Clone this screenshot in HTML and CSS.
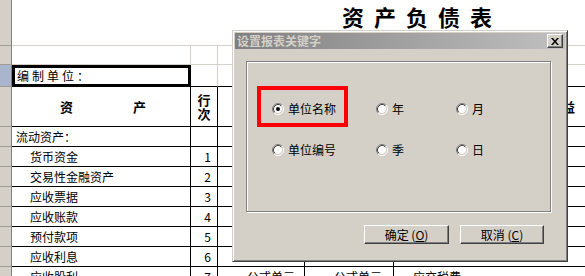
FILE: index.html
```html
<!DOCTYPE html>
<html lang="zh-CN">
<head>
    <meta charset="UTF-8">
    <title>资产负债表 - 设置报表关键字</title>
    <link rel="stylesheet" href="styles.css">
</head>
<body>

<div class="sheet">
    <div class="row r-title">
        <div class="hd"></div>
        <div class="cell title">资产负债表</div>
    </div>
    <div class="row r-blank">
        <div class="hd"></div>
        <div class="cell g"></div>
        <div class="cell g"></div>
        <div class="cell g"></div>
        <div class="cell g"></div>
        <div class="cell g last"></div>
    </div>
    <div class="row r-unit">
        <div class="hd sel"></div>
        <div class="cell unit">编制单位：</div>
        <div class="cell g bb"></div>
        <div class="cell g bb"></div>
        <div class="cell g bb"></div>
        <div class="cell g bb last"></div>
    </div>
    <div class="row r-head">
        <div class="hd"></div>
        <div class="cell b head"><span>资</span><span>产</span></div>
        <div class="cell b head-no">行<br>次</div>
        <div class="cell b"></div>
        <div class="cell b"></div>
        <div class="cell b last head-right">负债和所有者权益</div>
    </div>
    <div class="row r-item">
        <div class="hd"></div>
        <div class="cell b">流动资产：</div>
        <div class="cell b num"></div>
        <div class="cell b"></div>
        <div class="cell b"></div>
        <div class="cell b last"></div>
    </div>
    <div class="row r-item">
        <div class="hd"></div>
        <div class="cell b sub">货币资金</div>
        <div class="cell b num">1</div>
        <div class="cell b"></div>
        <div class="cell b"></div>
        <div class="cell b last"></div>
    </div>
    <div class="row r-item">
        <div class="hd"></div>
        <div class="cell b sub">交易性金融资产</div>
        <div class="cell b num">2</div>
        <div class="cell b"></div>
        <div class="cell b"></div>
        <div class="cell b last"></div>
    </div>
    <div class="row r-item">
        <div class="hd"></div>
        <div class="cell b sub">应收票据</div>
        <div class="cell b num">3</div>
        <div class="cell b"></div>
        <div class="cell b"></div>
        <div class="cell b last"></div>
    </div>
    <div class="row r-item">
        <div class="hd"></div>
        <div class="cell b sub">应收账款</div>
        <div class="cell b num">4</div>
        <div class="cell b"></div>
        <div class="cell b"></div>
        <div class="cell b last"></div>
    </div>
    <div class="row r-item">
        <div class="hd"></div>
        <div class="cell b sub">预付款项</div>
        <div class="cell b num">5</div>
        <div class="cell b"></div>
        <div class="cell b"></div>
        <div class="cell b last"></div>
    </div>
    <div class="row r-item">
        <div class="hd"></div>
        <div class="cell b sub">应收利息</div>
        <div class="cell b num">6</div>
        <div class="cell b"></div>
        <div class="cell b"></div>
        <div class="cell b last"></div>
    </div>
    <div class="row r-item">
        <div class="hd"></div>
        <div class="cell b sub">应收股利</div>
        <div class="cell b num">7</div>
        <div class="cell b formula">公式单元</div>
        <div class="cell b formula">公式单元</div>
        <div class="cell b last tax">应交税费</div>
    </div>
</div>

<div class="dialog">
    <div class="titlebar">
        <span class="caption">设置报表关键字</span>
        <button class="close">
            <svg width="8" height="7" viewBox="0 0 8 7"><path d="M0 0h2l2 2.5L6 0h2L5 3.5 8 7H6L4 4.5 2 7H0l3-3.5z" fill="#000"/></svg>
        </button>
    </div>

    <div class="group">
        <div class="options">
            <label class="opt">
                <svg class="radio" width="12" height="12" viewBox="0 0 12 12">
                    <circle cx="6" cy="6" r="4.2" fill="#fff"/>
                    <path d="M2.11 9.89A5.5 5.5 0 0 1 9.89 2.11" stroke="#808080" fill="none"/>
                    <path d="M9.89 2.11A5.5 5.5 0 0 1 2.11 9.89" stroke="#fff" fill="none"/>
                    <path d="M2.82 9.18A4.5 4.5 0 0 1 9.18 2.82" stroke="#404040" fill="none"/>
                    <path d="M9.18 2.82A4.5 4.5 0 0 1 2.82 9.18" stroke="#d4d0c8" fill="none"/>
                    <circle cx="6" cy="6" r="2" fill="#000"/>
                </svg>
                <span>单位名称</span>
            </label>
            <label class="opt">
                <svg class="radio" width="12" height="12" viewBox="0 0 12 12">
                    <circle cx="6" cy="6" r="4.2" fill="#fff"/>
                    <path d="M2.11 9.89A5.5 5.5 0 0 1 9.89 2.11" stroke="#808080" fill="none"/>
                    <path d="M9.89 2.11A5.5 5.5 0 0 1 2.11 9.89" stroke="#fff" fill="none"/>
                    <path d="M2.82 9.18A4.5 4.5 0 0 1 9.18 2.82" stroke="#404040" fill="none"/>
                    <path d="M9.18 2.82A4.5 4.5 0 0 1 2.82 9.18" stroke="#d4d0c8" fill="none"/>
                </svg>
                <span>年</span>
            </label>
            <label class="opt">
                <svg class="radio" width="12" height="12" viewBox="0 0 12 12">
                    <circle cx="6" cy="6" r="4.2" fill="#fff"/>
                    <path d="M2.11 9.89A5.5 5.5 0 0 1 9.89 2.11" stroke="#808080" fill="none"/>
                    <path d="M9.89 2.11A5.5 5.5 0 0 1 2.11 9.89" stroke="#fff" fill="none"/>
                    <path d="M2.82 9.18A4.5 4.5 0 0 1 9.18 2.82" stroke="#404040" fill="none"/>
                    <path d="M9.18 2.82A4.5 4.5 0 0 1 2.82 9.18" stroke="#d4d0c8" fill="none"/>
                </svg>
                <span>月</span>
            </label>
            <label class="opt">
                <svg class="radio" width="12" height="12" viewBox="0 0 12 12">
                    <circle cx="6" cy="6" r="4.2" fill="#fff"/>
                    <path d="M2.11 9.89A5.5 5.5 0 0 1 9.89 2.11" stroke="#808080" fill="none"/>
                    <path d="M9.89 2.11A5.5 5.5 0 0 1 2.11 9.89" stroke="#fff" fill="none"/>
                    <path d="M2.82 9.18A4.5 4.5 0 0 1 9.18 2.82" stroke="#404040" fill="none"/>
                    <path d="M9.18 2.82A4.5 4.5 0 0 1 2.82 9.18" stroke="#d4d0c8" fill="none"/>
                </svg>
                <span>单位编号</span>
            </label>
            <label class="opt">
                <svg class="radio" width="12" height="12" viewBox="0 0 12 12">
                    <circle cx="6" cy="6" r="4.2" fill="#fff"/>
                    <path d="M2.11 9.89A5.5 5.5 0 0 1 9.89 2.11" stroke="#808080" fill="none"/>
                    <path d="M9.89 2.11A5.5 5.5 0 0 1 2.11 9.89" stroke="#fff" fill="none"/>
                    <path d="M2.82 9.18A4.5 4.5 0 0 1 9.18 2.82" stroke="#404040" fill="none"/>
                    <path d="M9.18 2.82A4.5 4.5 0 0 1 2.82 9.18" stroke="#d4d0c8" fill="none"/>
                </svg>
                <span>季</span>
            </label>
            <label class="opt">
                <svg class="radio" width="12" height="12" viewBox="0 0 12 12">
                    <circle cx="6" cy="6" r="4.2" fill="#fff"/>
                    <path d="M2.11 9.89A5.5 5.5 0 0 1 9.89 2.11" stroke="#808080" fill="none"/>
                    <path d="M9.89 2.11A5.5 5.5 0 0 1 2.11 9.89" stroke="#fff" fill="none"/>
                    <path d="M2.82 9.18A4.5 4.5 0 0 1 9.18 2.82" stroke="#404040" fill="none"/>
                    <path d="M9.18 2.82A4.5 4.5 0 0 1 2.82 9.18" stroke="#d4d0c8" fill="none"/>
                </svg>
                <span>日</span>
            </label>
        </div>
        <div class="mark"></div>
    </div>

    <div class="actions">
        <button class="btn ok">确定 (<u>O</u>)</button>
        <button class="btn">取消 (<u>C</u>)</button>
    </div>
</div>

</body>
</html>
```

FILE: styles.css
```css
* {
    box-sizing: border-box;
}
body {
    margin: 0;
    width: 585px;
    height: 276px;
    overflow: hidden;
    position: relative;
    background-color: #fff;
    font-family: "Noto Sans CJK SC", "Liberation Sans", sans-serif;
    font-size: 12px;
    color: #000;
}

/* spreadsheet behind the dialog */
.row {
    display: grid;
    grid-template-columns: 12px 179px 27px 87px 89px 1fr;
}
.r-title { height: 46px; }
.r-blank { height: 19px; }
.r-unit { height: 22px; }
.r-head { height: 40px; }
.r-item { height: 20px; }
.hd {
    background-color: #d4d0c8;
    border-right: 1px solid #808080;
    border-bottom: 1px solid #a09c94;
}
.hd.sel {
    background-color: #a9b5cd;
}
.cell {
    display: flex;
    align-items: center;
    padding-left: 4px;
    line-height: 14px;
    white-space: nowrap;
    overflow: hidden;
}
.title {
    grid-column: 2 / -1;
    align-items: flex-start;
    padding: 4px 0 0 330px;
    font-size: 22px;
    font-weight: bold;
    line-height: 24px;
    letter-spacing: 10px;
    border-bottom: 1px solid #d4d0c8;
}
.g {
    border-right: 1px solid #d4d0c8;
    border-bottom: 1px solid #d4d0c8;
}
.g.bb {
    border-bottom-color: #000;
}
.b {
    border-right: 1px solid #000;
    border-bottom: 1px solid #000;
}
.last {
    border-right: none;
}
.unit {
    border: 3px solid #000;
    padding-left: 2px;
    letter-spacing: 3px;
}
.head {
    justify-content: center;
    gap: 60px;
    font-size: 13px;
    font-weight: bold;
}
.head-no {
    justify-content: center;
    padding: 0;
    font-size: 13px;
    font-weight: bold;
    text-align: center;
}
.head-right {
    justify-content: flex-end;
    padding-right: 10px;
    font-size: 13px;
    font-weight: bold;
}
.sub {
    padding-left: 18px;
}
.num {
    justify-content: flex-end;
    padding-right: 6px;
}
.formula {
    align-items: flex-start;
    padding: 3px 0 0 29px;
}
.tax {
    align-items: flex-start;
    padding: 3px 0 0 19px;
}

/* dialog window */
.dialog {
    position: absolute;
    left: 232px;
    top: 30px;
    width: 336px;
    height: 232px;
    padding: 2px;
    background-color: #d4d0c8;
    border: 1px solid;
    border-color: #d4d0c8 #404040 #404040 #d4d0c8;
    box-shadow: inset 1px 1px 0 #fff, inset -1px -1px 0 #808080;
}
.titlebar {
    display: flex;
    align-items: center;
    justify-content: space-between;
    height: 16px;
    padding: 0 2px;
    background: linear-gradient(to right, #808080, #c0c0c0);
}
.caption {
    color: #d4d0c8;
    font-weight: bold;
    line-height: 14px;
}
.close {
    display: flex;
    align-items: center;
    justify-content: center;
    width: 16px;
    height: 14px;
    padding: 0;
    background-color: #d4d0c8;
    border: 1px solid;
    border-color: #fff #404040 #404040 #fff;
    box-shadow: inset -1px -1px 0 #808080;
}
.group {
    position: relative;
    width: 305px;
    height: 151px;
    margin: 12px 0 0 11px;
    padding: 40px 0 0 25px;
    border: 1px solid #808080;
    box-shadow: inset 1px 1px 0 #fff, 1px 1px 0 #fff;
}
.options {
    display: grid;
    grid-template-columns: 104px 80px 1fr;
    row-gap: 27px;
}
.opt {
    display: flex;
    align-items: center;
    gap: 4px;
    height: 14px;
    line-height: 14px;
}
.radio {
    flex: none;
}
.mark {
    position: absolute;
    left: 10px;
    top: 24px;
    width: 91px;
    height: 41px;
    border: 4px solid #ff0000;
}
.actions {
    display: flex;
    justify-content: flex-end;
    gap: 11px;
    margin-top: 13px;
    padding-right: 21px;
}
.btn {
    width: 84px;
    height: 19px;
    padding: 0;
    font-family: inherit;
    font-size: 12px;
    line-height: 14px;
    color: #000;
    background-color: #d4d0c8;
    border: 1px solid;
    border-color: #fff #404040 #404040 #fff;
    box-shadow: inset -1px -1px 0 #808080;
}
.btn.ok {
    width: 85px;
}
```
